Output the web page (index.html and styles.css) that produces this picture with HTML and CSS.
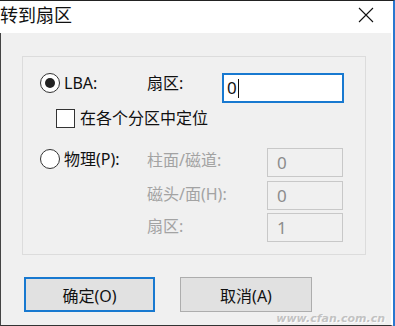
FILE: index.html
```html
<!DOCTYPE html>
<html lang="zh-CN">
<head>
    <meta charset="UTF-8">
    <title>转到扇区</title>
    <link rel="stylesheet" href="styles.css">
</head>
<body>
<div class="dialog">
    <!-- Barra del titolo -->
    <div class="titlebar">
        <span class="title">转到扇区</span>
        <svg class="close" width="16" height="16" viewBox="0 0 16 16">
            <path d="M1 1 L15 15 M15 1 L1 15" stroke="#111" stroke-width="1.1" fill="none"/>
        </svg>
    </div>

    <div class="client">
        <div class="group">
            <div class="row row-lba">
                <div class="col-a">
                    <span class="radio checked"></span>
                    <span>LBA:</span>
                </div>
                <span class="label">扇区:</span>
                <div class="input active">0<span class="caret"></span></div>
            </div>

            <div class="row row-check">
                <span class="checkbox"></span>
                <span>在各个分区中定位</span>
            </div>

            <div class="row row-chs">
                <div class="col-a">
                    <span class="radio"></span>
                    <span>物理(P):</span>
                </div>
                <span class="label off">柱面/磁道:</span>
                <div class="input small">0</div>
            </div>
            <div class="row row-sub">
                <div class="col-a"></div>
                <span class="label off">磁头/面(H):</span>
                <div class="input small">0</div>
            </div>
            <div class="row row-sub last">
                <div class="col-a"></div>
                <span class="label off">扇区:</span>
                <div class="input small">1</div>
            </div>
        </div>

        <div class="buttons">
            <button class="btn default">确定(O)</button>
            <button class="btn">取消(A)</button>
        </div>

        <div class="watermark">www.cfan.com.cn</div>
    </div>
</div>
</body>
</html>
```

FILE: styles.css
```css
body {
    margin: 0;
    font-family: "Noto Sans", "Noto Sans CJK SC", sans-serif;
    font-size: 16px;
    color: #111;
    background: #fff;
}

.dialog {
    width: 393px;
    height: 325px;
    border-top: 1px solid #222;
    border-right: 2px solid #2a78cf;
    display: flex;
    flex-direction: column;
}

.titlebar {
    height: 32px;
    background: #fff;
    position: relative;
    border-right: 2px solid #fff;
}

.title {
    font-family: "Noto Sans CJK SC", sans-serif;
    font-size: 18px;
    line-height: 24px;
    display: block;
    padding-top: 1px;
}

.close {
    position: absolute;
    right: 17px;
    top: 6px;
}

.client {
    flex: 1;
    background: #f0f0f0;
    border-left: 1px solid #444;
    border-right: 2px solid #fff;
    border-bottom: 1px solid #333;
    position: relative;
    padding-top: 23px;
}

.group {
    margin-left: 21px;
    width: 344px;
    height: 199px;
    border: 1px solid #dcdcdc;
    padding: 16px 0 0 17px;
    box-sizing: border-box;
}

.row {
    display: flex;
    align-items: flex-start;
}

.col-a {
    width: 107px;
    display: flex;
    align-items: center;
    gap: 4px;
    line-height: 20px;
}

.radio {
    width: 18px;
    height: 18px;
    border: 1px solid #333;
    border-radius: 50%;
    background: #fff;
    position: relative;
}

.radio.checked::after {
    content: "";
    position: absolute;
    left: 4px;
    top: 4px;
    width: 10px;
    height: 10px;
    border-radius: 50%;
    background: #222;
}

.label {
    line-height: 20px;
    width: 75px;
}

.label.off {
    color: #a3a3a3;
    width: 120px;
    margin-top: 2px;
}

.input {
    box-sizing: border-box;
    height: 30px;
    width: 122px;
    border: 1px solid #c8c8c8;
    padding: 0 0 0 5px;
    line-height: 28px;
    font-size: 17px;
    display: flex;
    align-items: center;
}

.input.active {
    border: 2px solid #1879d0;
    background: #fff;
    padding-left: 3px;
}

.caret {
    width: 1px;
    height: 19px;
    background: #111;
    margin-left: 1px;
}

.input.small {
    width: 76px;
    height: 29px;
    color: #8c8c8c;
    padding-left: 9px;
    background: #f0f0f0;
}

.row-check {
    margin: 5px 0 0 16px;
    align-items: center;
    gap: 5px;
    line-height: 20px;
}

.checkbox {
    width: 17px;
    height: 17px;
    border: 1px solid #333;
    background: #fff;
}

.row-chs {
    margin-top: 20px;
}

.row-chs .col-a {
    margin-top: 1px;
}

.row-sub {
    margin-top: 4px;
}

.row-sub .label.off {
    margin-top: 3px;
}

.row-sub.last {
    margin-top: 3px;
}

.buttons {
    display: flex;
    gap: 25px;
    margin: 22px 0 0 23px;
}

.btn {
    box-sizing: border-box;
    width: 132px;
    height: 35px;
    background: #e1e1e1;
    border: 1px solid #adadad;
    font-family: "Noto Sans", "Noto Sans CJK SC", sans-serif;
    font-size: 16px;
    color: #111;
    padding: 0;
}

.btn.default {
    border: 2px solid #1879d0;
    width: 131px;
}

/* filigrana in basso a destra */
.watermark {
    position: absolute;
    right: 6px;
    bottom: 0;
    font-family: "DejaVu Sans", sans-serif;
    font-style: italic;
    font-weight: bold;
    font-size: 11px;
    line-height: 12px;
    color: rgba(160, 160, 160, 0.6);
    text-shadow: 1px 1px 0 rgba(255, 255, 255, 0.8);
}
```
